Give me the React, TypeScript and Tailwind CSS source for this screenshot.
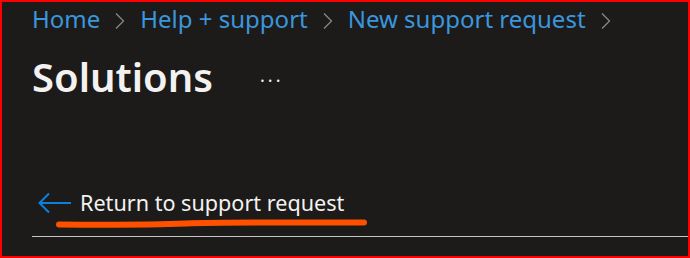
import React from "react";

const Chevron = () => (
  <svg width="12" height="18" viewBox="0 0 12 18" fill="none" className="mx-[14px] mt-[3px]">
    <path d="M2 1.5L9.5 9L2 16.5" stroke="#8a8886" strokeWidth="1.3" />
  </svg>
);

export default function App() {
  return (
    <div
      className="w-[690px] h-[258px] border-2 border-[#ff0000] bg-[#1c1b1a] overflow-hidden"
      style={{ fontFamily: '"Noto Sans", "Open Sans", sans-serif' }}
    >
      <div className="pl-[30px] pt-[1px]">
        <nav className="flex items-center text-[24px] leading-[32px] text-[#3a96dd]">
          <span>Home</span>
          <Chevron />
          <span>Help + support</span>
          <Chevron />
          <span>New support request</span>
          <Chevron />
        </nav>

        <div className="flex items-center mt-[18px]">
          <h1 className="text-[40px] leading-[48px] font-semibold text-[#f3f2f1]">Solutions</h1>
          <span className="ml-[47px] mt-[6px] text-[18px] tracking-[3px] text-[#f3f2f1]">···</span>
        </div>

        <div className="relative mt-[86px] flex items-center h-[32px]">
          <svg width="34" height="22" viewBox="0 0 34 22" fill="none" className="ml-[6px]">
            <path d="M33 11H2M11 1.5L1.5 11L11 20.5" stroke="#0f7fd8" strokeWidth="2" />
          </svg>
          <span className="ml-[8px] text-[21.6px] leading-[30px] text-[#f3f2f1]">Return to support request</span>
          <svg
            width="312"
            height="12"
            viewBox="0 0 312 12"
            fill="none"
            className="absolute left-[24px] top-[31px]"
          >
            <path
              d="M3 6.5C40 6.8 90 7 130 5.5C170 4 230 4.8 308 4.5"
              stroke="#ff5000"
              strokeWidth="6"
              strokeLinecap="round"
            />
          </svg>
        </div>

        <div className="mt-[17px] h-px bg-[#c8c6c4]" />
      </div>
    </div>
  );
}
